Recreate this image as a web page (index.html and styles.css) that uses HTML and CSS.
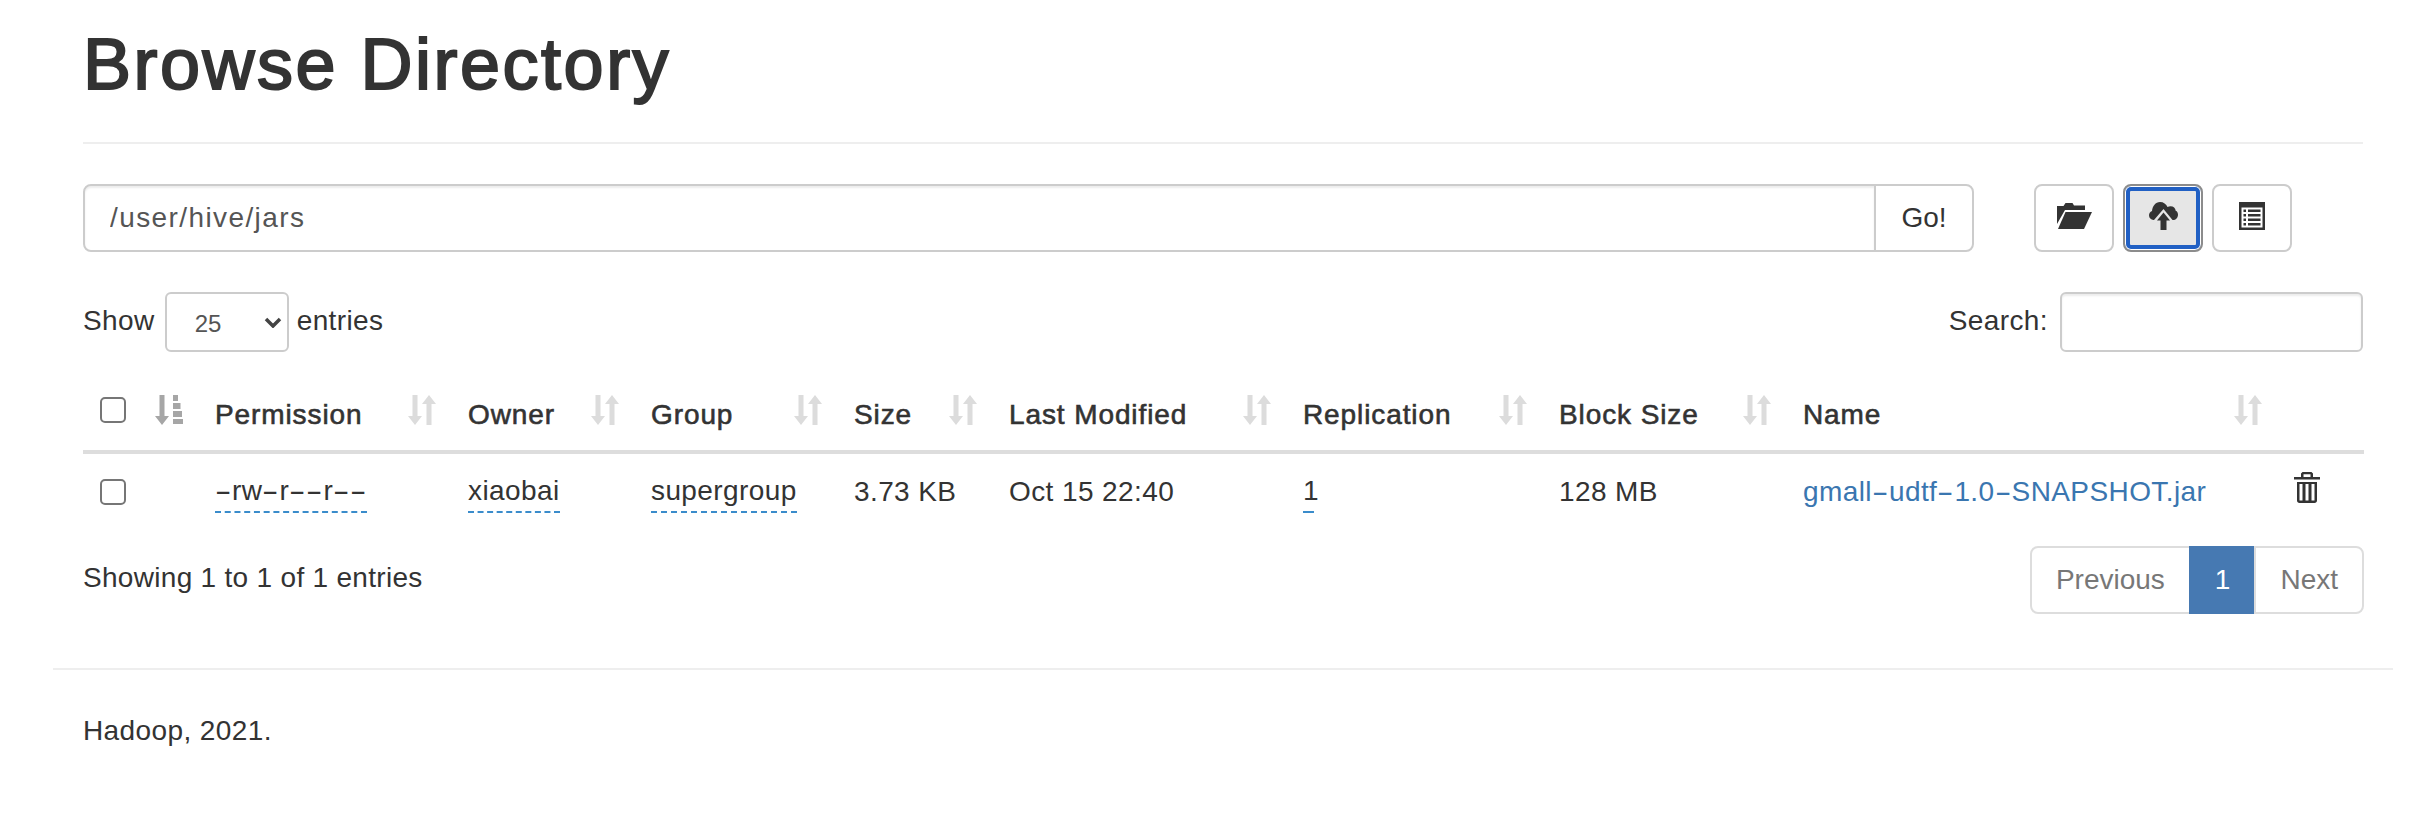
FILE: index.html
```html
<!DOCTYPE html>
<html lang="en">
<head>
<meta charset="utf-8">
<title>Browse Directory</title>
<link rel="stylesheet" href="styles.css">
</head>
<body>
<svg class="defs" aria-hidden="true">
  <symbol id="sort" viewBox="0 0 28 30">
    <path d="M4.500 0h5v21h4.500l-7 9-7-9h4.500z"/>
    <path d="M18.500 30h5V9h4.500l-7-9-7 9h4.500z"/>
  </symbol>
  <symbol id="sort-asc" viewBox="0 0 28 30">
    <path d="M4.500 0h5v21h4.500l-7 9-7-9h4.500z"/>
    <path d="M18 0h5v6h-5zM18 8h7.500v6H18zM18 16h9v6h-9zM18 24h10v5H18z"/>
  </symbol>
</svg>
<div class="page">
  <header class="page-header"><h1>Browse Directory</h1></header>
  <div class="toolbar">
    <div class="path-group">
      <input class="path-input" type="text" value="/user/hive/jars">
      <button class="go-btn" type="button">Go!</button>
    </div>
    <div class="actions">
      <button class="icon-btn" type="button" aria-label="Create directory">
        <svg class="icon icon-folder" viewBox="0 0 35 26"><path d="M0 3h6.500L8.500 0h7l1.500 2.500h11V7H8L0 21z"/><path d="M8.500 9H35l-8 17H1z"/></svg>
      </button>
      <button class="icon-btn focused" type="button" aria-label="Upload">
        <svg class="icon icon-cloud" viewBox="0 0 29 28"><path d="M11 0c3.500 0 6.300 2 7.500 5 1-.6 1.800-.8 3-.8 3 0 5 2 5.200 4.500 1.500.6 2.300 2.200 2.300 4 0 3-2.200 5.300-5 5.300h-.500L14.500 7 5 18h-.5C2 18 0 16 0 13.300c0-2 1-3.500 3-4.300C3.500 4 6.500 0 11 0z"/><path d="M14.500 10.500L21 18.500h-3.500V28h-6v-9.500H8z"/></svg>
      </button>
      <button class="icon-btn" type="button" aria-label="Details">
        <svg class="icon icon-list" viewBox="0 0 26 28"><path fill-rule="evenodd" d="M0 0h26v28H0zM2.500 5.500v20h21v-20zM4.500 7.500h2.500v2.500H4.500zM9 7.500h12.500v2.500H9zM4.500 12h2.500v2.500H4.500zM9 12h12.500v2.500H9zM4.500 16.500h2.500v2.500H4.500zM9 16.500h12.500v2.500H9zM4.500 21h2.500v2.500H4.500zM9 21h12.500v2.500H9z"/></svg>
      </button>
    </div>
  </div>
  <div class="table-controls">
    <label class="length"><span>Show</span>
      <span class="select-wrap">
        <select class="length-select"><option>25</option></select>
        <svg class="chevron" viewBox="0 0 18 11"><path d="M2 2l7 7 7-7" /></svg>
      </span>
      <span>entries</span></label>
    <label class="search"><span>Search:</span><input class="search-input" type="search"></label>
  </div>
  <table class="files">
    <colgroup>
      <col class="c0"><col class="c1"><col class="c2"><col class="c3"><col class="c4"><col class="c5"><col class="c6"><col class="c7"><col class="c8"><col class="c9">
    </colgroup>
    <thead>
      <tr>
        <th><input class="check" type="checkbox"><svg class="sort-icon active"><use href="#sort-asc"/></svg></th>
        <th>Permission<svg class="sort-icon"><use href="#sort"/></svg></th>
        <th>Owner<svg class="sort-icon"><use href="#sort"/></svg></th>
        <th>Group<svg class="sort-icon"><use href="#sort"/></svg></th>
        <th>Size<svg class="sort-icon"><use href="#sort"/></svg></th>
        <th>Last Modified<svg class="sort-icon"><use href="#sort"/></svg></th>
        <th>Replication<svg class="sort-icon"><use href="#sort"/></svg></th>
        <th>Block Size<svg class="sort-icon"><use href="#sort"/></svg></th>
        <th>Name<svg class="sort-icon"><use href="#sort"/></svg></th>
        <th></th>
      </tr>
    </thead>
    <tbody>
      <tr>
        <td><input class="check" type="checkbox"></td>
        <td><span class="editable"><span class="dash">-</span>rw<span class="dash">-</span>r<span class="dash">-</span><span class="dash">-</span>r<span class="dash">-</span><span class="dash">-</span></span></td>
        <td><span class="editable">xiaobai</span></td>
        <td><span class="editable">supergroup</span></td>
        <td>3.73 KB</td>
        <td>Oct 15 22:40</td>
        <td><span class="editable narrow">1</span></td>
        <td>128 MB</td>
        <td><a class="file-link" href="#">gmall<span class="dash">-</span>udtf<span class="dash">-</span>1.0<span class="dash">-</span>SNAPSHOT.jar</a></td>
        <td>
          <svg class="trash" viewBox="0 0 26 31"><path fill-rule="evenodd" d="M7 5V1.500L8.500 0h9L19 1.500V5h-2.500V2.300h-7V5zM0 5h26v2.500H0zM3 10h20v18.500c0 1.500-1 2.500-2.500 2.500h-15C4 31 3 30 3 28.500zM5.500 12v16.500h3V12zM11.500 12v16.500h3V12zM17.500 12v16.500h3V12z"/></svg>
        </td>
      </tr>
    </tbody>
  </table>
  <div class="table-footer">
    <div class="info">Showing 1 to 1 of 1 entries</div>
    <ul class="pagination">
      <li class="pg disabled">Previous</li>
      <li class="pg current">1</li>
      <li class="pg disabled">Next</li>
    </ul>
  </div>
  <hr class="foot-rule">
  <footer class="foot">Hadoop, 2021.</footer>
</div>
</body>
</html>
```
FILE: styles.css
```css
* { box-sizing: border-box; }
html, body { margin: 0; padding: 0; background: #fff; }
body {
  font-family: "Liberation Sans", Arial, sans-serif;
  font-size: 28px;
  line-height: 40px;
  letter-spacing: .4px;
  color: #333;
  height: 834px;
  overflow: hidden;
}
.defs { display: none; }
.page { width: 2340px; margin-left: 53px; padding: 0 30px; }
.page-header { height: 144px; border-bottom: 2px solid #eee; }
.page-header h1 {
  margin: 0;
  padding-top: 25px;
  font-size: 72px;
  line-height: 79px;
  font-weight: 400;
  letter-spacing: 2.500px;
  -webkit-text-stroke: 2px #333;
}
.toolbar { display: flex; margin-top: 40px; height: 68px; }
.path-group { display: flex; width: 1891px; }
.path-input {
  flex: 1;
  min-width: 0;
  height: 68px;
  padding: 0 25px;
  border: 2px solid #ccc;
  border-radius: 8px 0 0 8px;
  box-shadow: inset 0 2px 2px rgba(0,0,0,.075);
  font: 28px "Liberation Sans", Arial, sans-serif;
  letter-spacing: 1.400px;
  color: #555;
  outline: 0;
}
.go-btn {
  width: 100px;
  height: 68px;
  margin-left: -2px;
  border: 2px solid #ccc;
  border-radius: 0 8px 8px 0;
  background: #fff;
  font: 28px "Liberation Sans", Arial, sans-serif;
  color: #333;
  padding: 0;
}
.actions { display: flex; gap: 9px; margin-left: 60px; }
.icon-btn {
  display: flex;
  align-items: center;
  justify-content: center;
  width: 80px;
  height: 68px;
  padding: 0 0 4px;
  background: #fff;
  border: 2px solid #ccc;
  border-radius: 8px;
  color: #333;
}
.icon-btn.focused {
  background: #e6e6e6;
  border-color: #8c8c8c;
  box-shadow: inset 0 0 0 1px #fff, inset 0 0 0 5px #2160c4;
}
.icon { display: block; height: 28px; fill: currentColor; }
.icon-folder { width: 35px; height: 26px; }
.icon-cloud { width: 29px; }
.icon-list { width: 26px; }
.table-controls {
  display: flex;
  justify-content: space-between;
  align-items: center;
  margin-top: 40px;
  height: 60px;
}
.length, .search { display: flex; align-items: center; font-weight: 400; }
.length > span:not(.select-wrap), .search > span { margin-bottom: 3px; }
.select-wrap { position: relative; display: block; margin: 0 8px 0 10px; height: 60px; }
.length-select {
  appearance: none;
  display: block;
  width: 124px;
  height: 60px;
  padding: 2px 0 0 28px;
  border: 2px solid #ccc;
  border-radius: 6px;
  background: #fff;
  font: 24px "Liberation Sans", Arial, sans-serif;
  color: #555;
}
.chevron {
  position: absolute;
  right: 7px;
  top: 25px;
  width: 18px;
  height: 11px;
  fill: none;
  stroke: #444;
  stroke-width: 3.500px;
}
.search-input {
  width: 303px;
  height: 60px;
  margin-left: 12px;
  border: 2px solid #ccc;
  border-radius: 6px;
  box-shadow: inset 0 2px 2px rgba(0,0,0,.075);
  outline: 0;
}
.files {
  width: 2281px;
  margin-top: 18px;
  border-collapse: collapse;
  table-layout: fixed;
}
.c0 { width: 116px; }
.c1 { width: 253px; }
.c2 { width: 183px; }
.c3 { width: 203px; }
.c4 { width: 155px; }
.c5 { width: 294px; }
.c6 { width: 256px; }
.c7 { width: 244px; }
.c8 { width: 491px; }
.c9 { width: 86px; }
.files th {
  position: relative;
  height: 82px;
  padding: 16px 16px 15px;
  text-align: left;
  vertical-align: bottom;
  font-weight: 400;
  letter-spacing: .9px;
  -webkit-text-stroke: .6px #333;
  border-bottom: 4px solid #ddd;
}
.files td { height: 77px; padding: 16px; vertical-align: middle; white-space: nowrap; }
.files th, .files td { line-height: 40px; }
.check {
  appearance: none;
  display: block;
  width: 26px;
  height: 26px;
  margin: 0 0 12px 1px;
  border: 2px solid #767676;
  border-radius: 5px;
  background: #fff;
}
.files td .check { margin: 0 0 0 1px; }
.sort-icon {
  position: absolute;
  right: 16px;
  top: 25px;
  width: 28px;
  height: 30px;
  fill: #dcdcdc;
}
.sort-icon.active { fill: #a6a6a6; }
.editable { border-bottom: 2px dashed #3a8ccb; display: inline-block; line-height: 40px; }
.editable.narrow { letter-spacing: -5px; }
.dash { display: inline-block; width: .61em; text-align: center; transform: scaleX(1.800); }
.file-link { color: #3a76b0; text-decoration: none; }
.trash { display: block; width: 26px; height: 31px; fill: #333; margin-top: -8px; }
.table-footer {
  display: flex;
  justify-content: space-between;
  align-items: flex-start;
  width: 2281px;
  margin-top: 17px;
}
.info { margin-top: 12px; letter-spacing: .3px; }
.pagination { display: flex; margin: 0; padding: 0; list-style: none; height: 68px; letter-spacing: 0; }
.pg {
  display: flex;
  align-items: center;
  padding: 0 24px;
  border: 2px solid #ddd;
  margin-left: -2px;
  background: #fff;
}
.pg:first-child { margin-left: 0; border-radius: 8px 0 0 8px; }
.pg:last-child { border-radius: 0 8px 8px 0; }
.pg.disabled { color: #777; }
.pg.current { background: #4679b2; border-color: #4679b2; color: #fff; }
.foot-rule {
  margin: 54px -30px 0;
  border: 0;
  border-top: 2px solid #eee;
}
.foot { margin-top: 41px; }
```
